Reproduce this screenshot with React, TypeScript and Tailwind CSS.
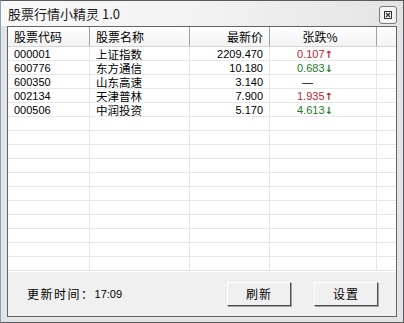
const rows = [
  { code: '000001', name: '上证指数', price: '2209.470', chg: '0.107', dir: 'up' },
  { code: '600776', name: '东方通信', price: '10.180', chg: '0.683', dir: 'down' },
  { code: '600350', name: '山东高速', price: '3.140', chg: '', dir: 'flat' },
  { code: '002134', name: '天津普林', price: '7.900', chg: '1.935', dir: 'up' },
  { code: '000506', name: '中润投资', price: '5.170', chg: '4.613', dir: 'down' },
];

const cjk = "font-['Noto_Sans_CJK_SC',sans-serif]";
const num = "font-['Liberation_Sans',Arial,sans-serif]";

function HeaderCell({ w, align, children }: { w: string; align: string; children: React.ReactNode }) {
  return (
    <div className={`${w} h-full flex items-center border-r border-[#a0a0a0] ${align} ${cjk} text-[12px] text-black`}>
      {children}
    </div>
  );
}

export default function App() {
  const filled = [...rows, ...Array(11).fill(null)];
  return (
    <div className="relative w-[404px] h-[323px] bg-[#e2e4e6] border border-[#5a5a5a] border-l-[#8aa0b6] flex flex-col overflow-hidden">
      {/* title bar */}
      <div className="h-[25px] flex items-center justify-between pl-[7px] pr-[6px] bg-gradient-to-r from-[#f8f8f8] via-[#f2f2f2] to-[#e4e4e4]">
        <span className={`${cjk} text-[13px] text-[#1a1a1a]`}>股票行情小精灵 1.0</span>
        <div className="w-[18px] h-[18px] border border-[#7a7a7a] rounded-[3px] bg-[#f4f4f4] flex items-center justify-center mt-[3px]">
          <svg width="8" height="8" viewBox="0 0 8 8">
            <rect x="0.5" y="0.5" width="7" height="7" fill="none" stroke="#333" strokeWidth="1" />
            <path d="M2 2L6 6M6 2L2 6" stroke="#333" strokeWidth="1.2" />
          </svg>
        </div>
      </div>

      {/* client area */}
      <div className="mx-[6px] mb-[5px] flex-1 border border-[#646464] bg-[#f0f0f0] flex flex-col">
        {/* list view */}
        <div className="h-[245px] bg-white flex flex-col">
          <div className="h-[20px] flex border-b border-[#d5d5d5] bg-gradient-to-b from-white to-[#f3f3f3]">
            <HeaderCell w="w-[82px]" align="pl-[6px]">股票代码</HeaderCell>
            <HeaderCell w="w-[100px]" align="pl-[6px]">股票名称</HeaderCell>
            <HeaderCell w="w-[80px]" align="justify-end pr-[6px]">最新价</HeaderCell>
            <HeaderCell w="w-[107px]" align="justify-center">
              <span className="-ml-[6px]">张跌%</span>
            </HeaderCell>
            <div className="flex-1" />
          </div>
          {filled.map((r, i) => (
            <div key={i} className="h-[14px] flex border-b border-[#e6e6e6] leading-[14px]">
              <div className={`w-[82px] pl-[6px] border-r border-[#e6e6e6] ${num} text-[11px] text-black`}>
                {r?.code}
              </div>
              <div className={`w-[100px] pl-[6px] border-r border-[#e6e6e6] ${cjk} text-[11.5px] text-black`}>
                {r?.name}
              </div>
              <div className={`w-[80px] pr-[6px] text-right border-r border-[#e6e6e6] ${num} text-[11px] text-black`}>
                {r?.price}
              </div>
              <div className={`w-[107px] border-r border-[#e6e6e6] ${num} text-[11px]`}>
                {r && r.dir === 'up' && (
                  <span className="pl-[27px] text-[#b8262d]">
                    {r.chg}
                    <span className="font-['DejaVu_Sans',sans-serif] font-bold text-[10px]">↑</span>
                  </span>
                )}
                {r && r.dir === 'down' && (
                  <span className="pl-[27px] text-[#1b7a25]">
                    {r.chg}
                    <span className="font-['DejaVu_Sans',sans-serif] font-bold text-[10px]">↓</span>
                  </span>
                )}
                {r && r.dir === 'flat' && <span className="pl-[32px] text-black">—</span>}
              </div>
              <div className="flex-1" />
            </div>
          ))}
        </div>

        {/* footer */}
        <div className="flex-1 flex items-center pl-[19px] pr-[18px]">
          <span className={`${cjk} text-[12px] tracking-[1.5px] text-black`}>更新时间：</span>
          <span className={`${num} text-[11px] text-black`}>17:09</span>
          <div className="flex-1" />
          <button className={`w-[64px] h-[24px] bg-[#f0f0f0] border border-t-white border-l-white border-r-[#505050] border-b-[#505050] shadow-[1px_1px_0_#a0a0a0] ${cjk} text-[12px] tracking-[1px] text-black`}>
            刷新
          </button>
          <button className={`ml-[23px] w-[64px] h-[24px] bg-[#f0f0f0] border border-t-white border-l-white border-r-[#505050] border-b-[#505050] shadow-[1px_1px_0_#a0a0a0] ${cjk} text-[12px] tracking-[1px] text-black`}>
            设置
          </button>
        </div>
      </div>
    </div>
  );
}
